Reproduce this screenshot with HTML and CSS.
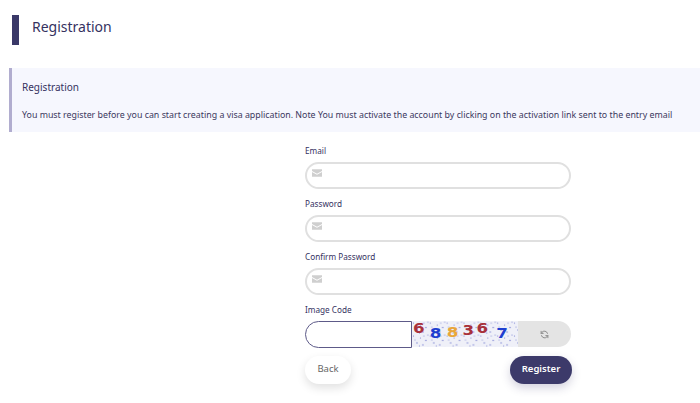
FILE: index.html
```html
<!DOCTYPE html>
<html lang="en">
<head>
<meta charset="utf-8">
<title>Registration</title>
<link rel="stylesheet" href="styles.css">
</head>
<body>
<header class="page-head">
  <span class="head-bar"></span>
  <h1>Registration</h1>
</header>
<section class="notice">
  <h2>Registration</h2>
  <p>You must register before you can start creating a visa application. Note You must activate the account by clicking on the activation link sent to the entry email</p>
</section>
<form class="form">
  <div class="field">
    <label>Email</label>
    <div class="input">
      <svg class="mail" viewBox="0 0 12 9"><path d="M0 0h12v2.2L6 5.4 0 2.2zM0 3.4l6 3.2 6-3.2V9H0z"/></svg>
    </div>
  </div>
  <div class="field">
    <label>Password</label>
    <div class="input">
      <svg class="mail" viewBox="0 0 12 9"><path d="M0 0h12v2.2L6 5.4 0 2.2zM0 3.4l6 3.2 6-3.2V9H0z"/></svg>
    </div>
  </div>
  <div class="field">
    <label>Confirm Password</label>
    <div class="input">
      <svg class="mail" viewBox="0 0 12 9"><path d="M0 0h12v2.2L6 5.4 0 2.2zM0 3.4l6 3.2 6-3.2V9H0z"/></svg>
    </div>
  </div>
  <div class="field">
    <label>Image Code</label>
    <div class="captcha-row">
      <div class="code-input"></div>
      <svg class="captcha" viewBox="0 0 107 26">
        <defs>
          <pattern id="noise" width="17" height="13" patternUnits="userSpaceOnUse">
            <rect width="17" height="13" fill="#eff0f8"/>
            <g fill="#737bd0">
              <circle cx="1.5" cy="2" r=".6"/><circle cx="5" cy="9" r=".7"/><circle cx="8.5" cy="4" r=".55"/>
              <circle cx="11" cy="11" r=".65"/><circle cx="14" cy="6.5" r=".7"/><circle cx="16" cy="1" r=".55"/>
              <circle cx="3" cy="6" r=".5"/><circle cx="12" cy="2" r=".5"/><circle cx="7.5" cy="12" r=".55"/>
            </g>
          </pattern>
        </defs>
        <rect width="107" height="26" fill="url(#noise)"/>
        <g class="digits">
          <text transform="translate(1 12) scale(1.3 1.05)" fill="#a8323c">6</text>
          <text transform="translate(18 17) scale(1.3 1.05)" fill="#1f3fd0">8</text>
          <text transform="translate(35 16.5) scale(1.3 1.05)" fill="#e8a63a">8</text>
          <text transform="translate(51 14.5) scale(1.3 1.05)" fill="#a8323c">3</text>
          <text transform="translate(65 11.5) scale(1.3 1.05)" fill="#a8323c">6</text>
          <text transform="translate(85 17) scale(1.3 1.05)" fill="#1f3fd0">7</text>
        </g>
      </svg>
      <div class="refresh">
        <svg viewBox="0 0 24 24" fill="none" stroke="#8a8a8a" stroke-width="2.6" stroke-linecap="round" stroke-linejoin="round"><path d="M20 9a8.5 8.5 0 0 0-15-2.5L3 9"/><path d="M3 3.5V9h5.5"/><path d="M4 15a8.5 8.5 0 0 0 15 2.5l2-2.5"/><path d="M21 20.5V15h-5.5"/></svg>
      </div>
    </div>
  </div>
  <div class="actions">
    <button type="button" class="btn back">Back</button>
    <button type="button" class="btn register">Register</button>
  </div>
</form>
</body>
</html>
```
FILE: styles.css
```css
* { box-sizing: border-box; }
html, body { margin: 0; padding: 0; }
body {
  width: 700px;
  height: 403px;
  overflow: hidden;
  background: #fff;
  color: #35325f;
  font-family: "Noto Sans", "Open Sans", sans-serif;
}
.page-head {
  display: flex;
  align-items: flex-start;
  gap: 13px;
  padding: 15px 0 0 12px;
  height: 68px;
}
.head-bar {
  width: 7px;
  height: 30px;
  background: #3a3868;
}
.page-head h1 {
  margin: -1px 0 0;
  font-size: 14px;
  font-weight: 400;
  line-height: 26px;
}
.notice {
  margin-left: 9px;
  height: 64px;
  padding: 12px 0 0 10px;
  background: #f6f7fe;
  border-left: 3px solid #b1adcf;
}
.notice h2 {
  margin: 0 0 13px;
  font-size: 10px;
  font-weight: 400;
  line-height: 15px;
}
.notice p {
  margin: 0;
  font-size: 8.84px;
  line-height: 14px;
  white-space: nowrap;
  color: #3c3960;
}
.form {
  width: 266px;
  margin: 12px 0 0 305px;
}
.field { margin-bottom: 8px; }
.field label {
  display: block;
  height: 18px;
  font-size: 8.2px;
  line-height: 14px;
}
.input {
  display: flex;
  align-items: center;
  height: 27px;
  padding-left: 5px;
  border: 2px solid #e0e0e0;
  border-radius: 14px;
  background: #fff;
}
.mail { width: 10px; height: 8px; fill: #cfcfcf; margin-top: -5px; }
.captcha-row { display: flex; height: 27px; }
.code-input {
  width: 107px;
  border: 1.5px solid #5d5a88;
  border-radius: 14px 0 0 14px;
  background: #fff;
}
.captcha { width: 106px; height: 26px; display: block; }
.digits text {
  font-family: "DejaVu Sans", sans-serif;
  font-size: 13px;
  font-weight: 700;
}
.refresh {
  flex: 1;
  height: 26px;
  display: flex;
  align-items: center;
  justify-content: center;
  background: #e4e4e4;
  border-radius: 0 14px 14px 0;
}
.refresh svg { width: 9px; height: 9px; }
.actions {
  display: flex;
  justify-content: space-between;
  margin-top: 3px;
}
.btn {
  height: 28px;
  border: 0;
  border-radius: 14px;
  font-family: inherit;
  font-size: 9.5px;
  padding: 0 0 3px;
  margin: 0;
}
.back {
  width: 46px;
  background: #fff;
  color: #666;
  box-shadow: 0 4px 10px rgba(0, 0, 0, .12);
}
.register {
  width: 62px;
  margin-right: -1px;
  background: #3c3a6a;
  color: #fff;
  font-weight: 600;
  box-shadow: 0 4px 10px rgba(55, 52, 106, .22);
}
```
